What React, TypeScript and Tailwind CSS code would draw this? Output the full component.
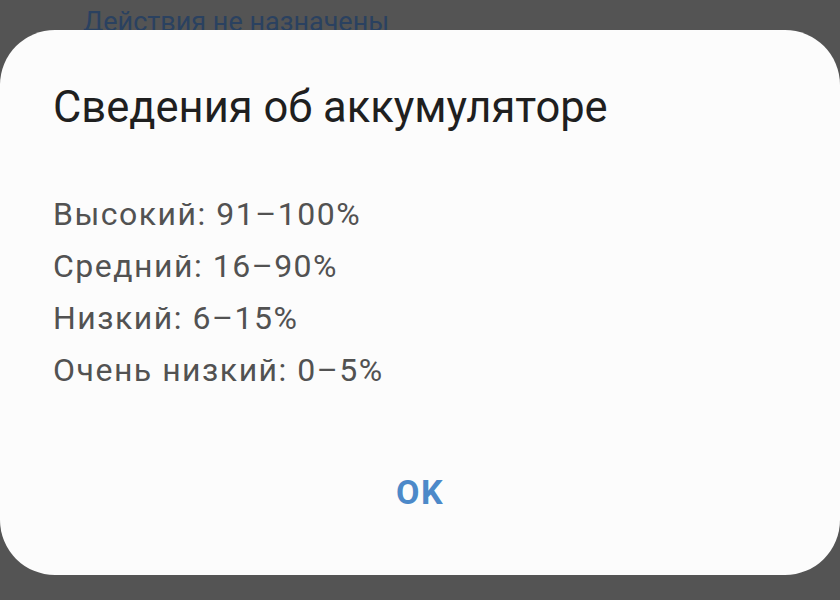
import React from "react";

const levels = [
    "Высокий: 91–100%",
    "Средний: 16–90%",
    "Низкий: 6–15%",
    "Очень низкий: 0–5%",
];

export default function App() {
    return (
        <div
            className="relative w-[840px] h-[600px] overflow-hidden bg-[#545454]"
            style={{ fontFamily: "Roboto, 'Noto Sans', sans-serif" }}
        >
            {/* settings screen behind the dim */}
            <div className="pl-[83px] pt-[4px]">
                <p className="text-[27px] leading-[36px] text-[#2a4160]">Действия не назначены</p>
            </div>

            {/* battery info dialog */}
            <div className="absolute left-0 right-0 top-[30px] h-[545px] bg-[#fcfcfc] rounded-[55px] flex flex-col">
                <h2 className="pl-[53px] pt-[52px] text-[43.5px] leading-[52px] text-[#1f1f1f]">
                    Сведения об аккумуляторе
                </h2>
                <div className="pl-[53px] pt-[54px] flex flex-col">
                    {levels.map((l) => (
                        <p key={l} className="text-[32px] leading-[52px] tracking-[1.5px] text-[#525252]">{l}</p>
                    ))}
                </div>
                <div className="mt-auto mb-[63px] flex justify-center">
                    <button className="text-[34px] leading-[40px] font-bold tracking-[1.5px] text-[#4c89c9]">OK</button>
                </div>
            </div>
        </div>
    );
}
